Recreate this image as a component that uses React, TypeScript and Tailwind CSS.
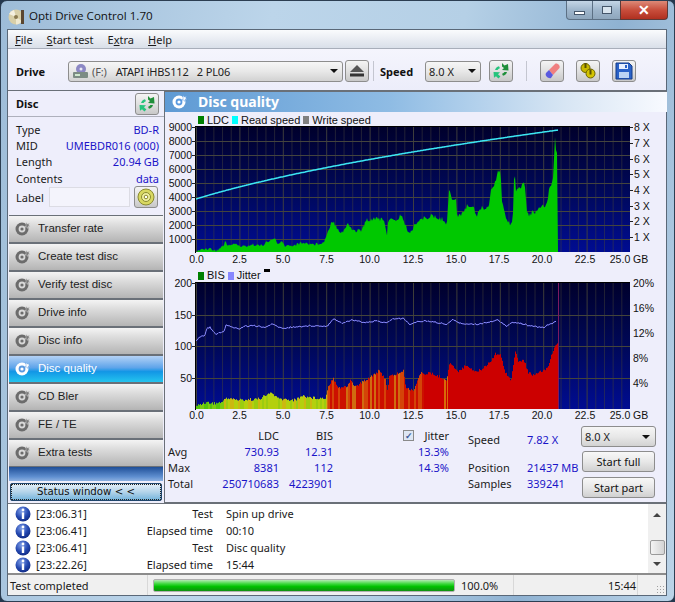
import { ReactNode } from "react";

type Pt = [number, number];

const noise = (i: number) => {
  const s = Math.sin(i * 12.9898) * 43758.5453;
  return s - Math.floor(s);
};

const at = (pts: Pt[], x: number) => {
  for (let i = 1; i < pts.length; i++) {
    if (x <= pts[i][0]) {
      const [x0, y0] = pts[i - 1];
      const [x1, y1] = pts[i];
      return y0 + ((y1 - y0) * (x - x0)) / Math.max(x1 - x0, 0.01);
    }
  }
  return pts[pts.length - 1][1];
};

// zoomed picture coords -> screen coords
const left1 = (a: number[][]): Pt[] => a.map(([x, y]) => [165 + x / 3, 110 + y / 3]);
const right1 = (a: number[][]): Pt[] => a.map(([x, y]) => [420 + x / 3, 110 + y / 3]);
const left2 = (a: number[][]): Pt[] => a.map(([x, y]) => [165 + x / 3, 265 + y / 3]);
const right2 = (a: number[][]): Pt[] => a.map(([x, y]) => [420 + x / 3, 265 + y / 3]);

const ldcPts = [
  ...left1([[95,425],[110,418],[130,415],[155,422],[170,410],[177,405],[178,388],[185,405],[210,402],[230,410],[270,403],[285,408],[310,395],[330,385],[340,405],[350,395],[360,408],[390,405],[410,398],[450,403],[478,396],[487,365],[502,330],[515,350],[530,368],[550,342],[565,362],[590,360],[605,330],[625,325],[640,322],[660,340],[665,380],[670,325],[690,335],[710,313],[720,345],[735,372],[750,340]]),
  ...right1([[0,330],[30,318],[75,330],[80,345],[88,232],[95,265],[108,270],[112,325],[140,290],[160,285],[170,320],[180,295],[205,292],[212,245],[225,215],[235,180],[242,180],[245,270],[255,315],[270,340],[278,335],[283,170],[288,245],[300,235],[313,212],[322,315],[345,305],[380,285],[388,235],[400,200],[405,80],[409,130],[412,130],[416,85]]),
];

const bisPts = [
  ...left2([[95,422],[120,412],[150,415],[175,410],[178,398],[220,405],[280,402],[318,383],[340,402],[390,405],[410,392],[440,398],[480,400],[487,368],[503,338],[520,368],[545,365],[555,345],[570,365],[600,345],[640,318],[660,340],[667,380],[672,335],[715,318],[722,370],[745,375]]),
  ...right2([[0,325],[30,325],[72,340],[78,350],[88,290],[110,320],[140,300],[165,320],[180,315],[210,290],[225,265],[240,270],[255,320],[272,345],[285,262],[295,290],[310,285],[325,325],[345,330],[380,310],[405,240],[415,225]]),
];

const jitterPts = [
  ...left2([[95,225],[108,212],[118,215],[125,190],[135,187],[152,208],[178,198],[182,180],[220,192],[240,183],[270,182],[300,188],[320,177],[350,190],[400,185],[440,182],[487,183],[505,160],[530,175],[560,165],[600,172],[640,168],[665,175],[680,162],[715,160],[735,178]]),
  ...right2([[0,168],[40,170],[80,178],[100,163],[120,175],[170,178],[235,165],[260,183],[280,172],[300,175],[340,185],[370,187],[400,172],[410,170]]),
];

const columns: number[] = [];
for (let x = 196; x < 558; x++) columns.push(x);

const speedLine = [...columns, 558]
  .map((x) => {
    const t = (x - 196) / 362;
    return `${x},${(199 - 55.8 * (Math.sqrt(1 + 4 * t) - 1)).toFixed(1)}`;
  })
  .join(" ");

const ldcPath =
  "M196 252 " +
  columns
    .map((x) => `L${x} ${Math.min(252, at(ldcPts, x) + (noise(x) - 0.5) * (x < 327 ? 3 : 5)).toFixed(1)}`)
    .join(" ") +
  " L558 252 Z";

const jitterLine = columns
  .filter((x) => x < 557)
  .map((x) => `${x},${(at(jitterPts, x) + (noise(x + 7) - 0.5) * 1.6).toFixed(1)}`)
  .join(" ");

const bisColor = (x: number) => {
  const n = noise(Math.floor(x / 2) + 31);
  if (x < 224) return n > 0.75 ? "#7ccc10" : "#58c40c";
  if (x < 327) return n > 0.75 ? "#ccb810" : n > 0.35 ? "#b4d00e" : "#9ccc10";
  if (x < 424) return n > 0.8 ? "#d06c10" : n > 0.55 ? "#d44408" : "#cc1000";
  if (x === 444 || x === 445 || x === 447) return "#d86a08";
  return "#cc0000";
};

const xLabels: [string, number][] = [
  ["0.0", 196.5], ["2.5", 239.5], ["5.0", 283], ["7.5", 326.5], ["10.0", 369.5], ["12.5", 413],
  ["15.0", 456], ["17.5", 499], ["20.0", 542], ["22.5", 585], ["25.0", 620],
];

const AxisX = ({ y }: { y: number }) => (
  <g fontSize="10.5" fill="#111">
    {xLabels.map(([t, x]) => (
      <text key={t} x={x} y={y} textAnchor="middle">
        {t}
      </text>
    ))}
    <text x="633" y={y}>GB</text>
  </g>
);

const Grid = ({ top, bottom, rows, fill, color }: { top: number; bottom: number; rows: number[]; fill: string; color: string }) => (
  <g>
    <rect x="196" y={top} width="434" height={bottom - top} fill={`url(#${fill})`} />
    {Array.from({ length: 50 }, (_, i) => (
      <line
        key={i}
        x1={196.5 + i * 8.68}
        x2={196.5 + i * 8.68}
        y1={top}
        y2={bottom}
        stroke={color}
        strokeOpacity={i % 5 === 0 ? 0.9 : 0.5}
      />
    ))}
    {rows.map((y) => (
      <line key={y} x1="196" x2="630" y1={y + 0.5} y2={y + 0.5} stroke={color} />
    ))}
  </g>
);

const Gradient = ({ id }: { id: string }) => (
  <linearGradient id={id} x1="0" y1="0" x2="0" y2="1">
    <stop offset="0" stopColor="#00002c" />
    <stop offset="0.5" stopColor="#000858" />
    <stop offset="1" stopColor="#000c92" />
  </linearGradient>
);

const Chart1 = () => {
  const rows = [141, 155, 169, 183, 197, 211, 225, 239];
  const rightLabels = [127, 143, 159, 174, 190, 206, 221, 237];
  return (
    <svg width="502" height="141" viewBox="165 127 502 141" className="block overflow-visible font-['Liberation_Sans',sans-serif]">
      <defs>
        <Gradient id="plotA" />
      </defs>
      <Grid top={127} bottom={252} rows={rows} fill="plotA" color="#44443e" />
      <path d={ldcPath} fill="#00c800" />
      <polyline points={speedLine} fill="none" stroke="#3ce8f4" strokeWidth="1.5" />
      <rect x="196" y="126" width="434" height="1" fill="#000" />
      <rect x="195" y="126" width="1" height="127" fill="#000" />
      <g fontSize="10.5" fill="#111">
        {[9000, 8000, 7000, 6000, 5000, 4000, 3000, 2000, 1000].map((v, i) => (
          <g key={v}>
            <text x="192" y={131 + i * 14} textAnchor="end">{v}</text>
            <line x1="192" x2="196" y1={127.5 + i * 14} y2={127.5 + i * 14} stroke="#222" />
          </g>
        ))}
        {rightLabels.map((y, i) => (
          <g key={y}>
            <line x1="630" x2="633" y1={y + 0.5} y2={y + 0.5} stroke="#222" />
            <text x="634" y={y + 4}>{`${8 - i} X`}</text>
          </g>
        ))}
      </g>
      <AxisX y={263} />
    </svg>
  );
};

const Chart2 = () => {
  const rows = [315, 346, 378];
  return (
    <svg width="502" height="138" viewBox="165 283 502 138" className="block overflow-visible font-['Liberation_Sans',sans-serif]">
      <defs>
        <Gradient id="plotB" />
      </defs>
      <Grid top={283} bottom={409} rows={rows} fill="plotB" color="#44443a" />
      {columns.map((x) => {
        const y = Math.min(408, at(bisPts, x) + (noise(x + 3) - 0.5) * 3);
        return <rect key={x} x={x} y={y} width="1" height={409 - y} fill={bisColor(x)} />;
      })}
      <polyline points={jitterLine} fill="none" stroke="#8a8aff" strokeWidth="1" />
      <rect x="558" y="283" width="1" height="126" fill="#7c1a60" />
      <rect x="196" y="282" width="434" height="1" fill="#000" />
      <rect x="195" y="282" width="1" height="128" fill="#000" />
      <g fontSize="10.5" fill="#111">
        {[[200, 283], [150, 315], [100, 346], [50, 378]].map(([v, y]) => (
          <g key={v}>
            <text x="192" y={y + 4} textAnchor="end">{v}</text>
            <line x1="192" x2="196" y1={y + 0.5} y2={y + 0.5} stroke="#222" />
          </g>
        ))}
        {[["20%", 283], ["16%", 308], ["12%", 333], ["8%", 358], ["4%", 383]].map(([t, y]) => (
          <text key={t} x="633" y={Number(y) + 4}>{t}</text>
        ))}
      </g>
      <AxisX y={419} />
    </svg>
  );
};

const Arrows = () => (
  <svg width="18" height="18" viewBox="0 0 18 18">
    <path d="M10 1l2.5 2.5L16 2l.5 6.5-6.5-.5 2-2-2-1.5z" fill="#1f8f3a" />
    <path d="M1.5 10l6.5.2-2 2 2.4 2.3-2 2-2.4-2.3-2 1.6z" fill="#25c47c" />
    <path d="M3 8c.6-2 2-3.4 4-3.8l1 2c-1.2.2-2 1-2.4 1.8z" fill="#25c47c" />
    <path d="M15 10c-.6 2-2 3.4-4 3.8l-1-2c1.2-.2 2-1 2.4-1.8z" fill="#1f8f3a" />
  </svg>
);

const Disc = ({ light }: { light?: boolean }) => (
  <svg width="16" height="16" viewBox="0 0 16 16">
    <circle cx="7" cy="8" r="6.5" fill={light ? "#ffffff" : "#6c6c6c"} />
    <circle cx="7" cy="8" r="3.4" fill={light ? "#5a9ae0" : "#d8d8d8"} />
    <circle cx="7" cy="8" r="1.6" fill={light ? "#ffffff" : "#6c6c6c"} />
    <path d="M11 1.5l1.5 1.5 2-.8-.8 2 1.5 1-2 .3-.4 2-1.2-1.7-1.6.4 1-1.6z" fill={light ? "#ffffff" : "#7a7a7a"} stroke={light ? "#5a9ae0" : "#d8d8d8"} strokeWidth=".5" />
  </svg>
);

const Info = () => (
  <svg width="16" height="16" viewBox="0 0 16 16">
    <defs>
      <radialGradient id="inf" cx="0.4" cy="0.3" r="0.8">
        <stop offset="0" stopColor="#7f9fe8" />
        <stop offset="0.55" stopColor="#2448b0" />
        <stop offset="1" stopColor="#0c2478" />
      </radialGradient>
    </defs>
    <circle cx="8" cy="8" r="7.5" fill="url(#inf)" />
    <circle cx="8" cy="4" r="1.4" fill="#fff" />
    <rect x="6.8" y="6.4" width="2.4" height="6.6" fill="#fff" />
  </svg>
);

const Caret = () => <span className="w-0 h-0 border-x-[4px] border-x-transparent border-t-[4px] border-t-[#111]" />;

const ToolButton = ({ children, w = "w-6" }: { children: ReactNode; w?: string }) => (
  <button className={`${w} h-[22px] shrink-0 flex items-center justify-center rounded-[3px] border border-[#8d8d8d] bg-[linear-gradient(#f4f4f4,#e0e0e0_50%,#c8c8c8)]`}>
    {children}
  </button>
);

const Combo = ({ className, children }: { className: string; children: ReactNode }) => (
  <div className={`${className} h-[21px] shrink-0 flex items-center justify-between rounded-[3px] border border-[#8d8d8d] bg-[linear-gradient(#f6f6f6,#e8e8e8_50%,#d2d2d2)] text-[#222]`}>
    {children}
  </div>
);

const Legend = ({ color, label }: { color: string; label: string }) => (
  <span className="flex items-center gap-[3px]">
    <span className={`w-[6px] h-[8px] ${color}`} />
    <span>{label}</span>
  </span>
);

const navItems = ["Transfer rate", "Create test disc", "Verify test disc", "Drive info", "Disc info", "Disc quality", "CD Bler", "FE / TE", "Extra tests"];

const logRows = [
  ["[23:06.31]", "Test", "Spin up drive"],
  ["[23:06.41]", "Elapsed time", "00:10"],
  ["[23:06.41]", "Test", "Disc quality"],
  ["[23:22.26]", "Elapsed time", "15:44"],
];

const infoRows = [
  ["Type", "BD-R"],
  ["MID", "UMEBDR016 (000)"],
  ["Length", "20.94 GB"],
  ["Contents", "data"],
];

const App = () => {
  return (
    <div className="w-[675px] h-[602px] overflow-hidden bg-[#24384e] font-['Noto_Sans',sans-serif] text-[11px] leading-none text-[#1a1a1a]">
      <div className="w-full h-full flex flex-col rounded-[7px] border border-[#2c3e52] bg-[linear-gradient(100deg,#9dbcd8_0%,#bcd5ea_35%,#b5d0e6_60%,#8fb2d2_80%,#bcd4e8_100%)]">
        {/* title bar */}
        <div className="h-[28px] shrink-0 flex items-start">
          <div className="flex items-center gap-[4px] pl-[7px] pt-[2px] h-[28px]">
            <svg width="17" height="17" viewBox="0 0 17 17">
              <circle cx="8" cy="9" r="7.5" fill="#d8cfa8" />
              <path d="M8 9L1 6a7.5 7.5 0 0 1 5-4z" fill="#f4f0e0" />
              <path d="M8 9l6 4a7.5 7.5 0 0 1-6 3.5z" fill="#efe9d0" />
              <circle cx="8" cy="9" r="2" fill="#8a7a50" />
              <rect x="13" y="2" width="3" height="14" fill="#5a4630" />
            </svg>
            <span className="font-['Open_Sans',sans-serif] text-[11.6px] text-[#111]">Opti Drive Control 1.70</span>
          </div>
          <div className="ml-auto mr-[6px] flex h-[19px]">
            <div className="w-[27px] flex items-center justify-center rounded-bl-[4px] border border-t-0 border-[#5c7084] bg-[linear-gradient(#c4d6e6,#9fb6cc_50%,#8ea6bc)]">
              <span className="w-[11px] h-[4px] mt-[5px] border border-[#45566a] bg-white" />
            </div>
            <div className="w-[27px] flex items-center justify-center border-y border-b-[#5c7084] border-t-0 bg-[linear-gradient(#c4d6e6,#9fb6cc_50%,#8ea6bc)]">
              <span className="w-[10px] h-[8px] border border-[#45566a] bg-[#d8e4ee]" />
            </div>
            <div className="w-[48px] flex items-center justify-center rounded-br-[4px] border border-t-0 border-[#5c3a38] bg-[linear-gradient(#dd8a78,#c84e3c_50%,#b03020)] text-[14px] font-bold text-white">
              ✕
            </div>
          </div>
        </div>

        {/* client */}
        <div className="ml-[6px] mr-[7px] h-[567px] flex flex-col border border-[#5a6878] bg-[#eeeefb]">
          {/* menu */}
          <div className="h-[19px] shrink-0 flex items-center pl-[7px] gap-[14px] border-b border-[#a8aeba] bg-[linear-gradient(#fafbfd,#d9dfe9)] text-[11px]">
            <span><u>F</u>ile</span>
            <span><u>S</u>tart test</span>
            <span>E<u>x</u>tra</span>
            <span><u>H</u>elp</span>
          </div>

          {/* toolbar */}
          <div className="h-[42px] shrink-0 flex items-center pl-[8px] pt-[3px] border-b border-[#6a7078] bg-[linear-gradient(#f5f5fd,#ecedfa)]">
            <span className="w-[52px] font-bold text-[#111]">Drive</span>
            <Combo className="w-[275px] pl-[3px] pr-[4px]">
              <span className="flex items-center text-[11px] tracking-[-0.15px]">
                <svg width="18" height="17" viewBox="0 0 18 17" className="mr-[2px]">
                  <circle cx="9" cy="6" r="5" fill="#8c88c4" />
                  <circle cx="9" cy="6" r="1.5" fill="#e8e8f4" />
                  <rect x="1" y="9" width="15" height="6" rx="1" fill="#7c8c84" />
                  <rect x="3" y="11" width="5" height="2" fill="#cfe8cf" />
                </svg>
                <span className="text-[#555]">(F:)</span>
                <span className="ml-[9px]">ATAPI iHBS112&nbsp;&nbsp; 2 PL06</span>
              </span>
              <Caret />
            </Combo>
            <div className="ml-[2px]">
              <ToolButton>
                <svg width="16" height="14" viewBox="0 0 16 14">
                  <path d="M8 1l7 7H1z" fill="#555" />
                  <rect x="1" y="9.5" width="14" height="3" fill="#333" />
                </svg>
              </ToolButton>
            </div>
            <span className="w-px h-[20px] ml-[4px] bg-[#c4c6d0]" />
            <span className="ml-[6px] w-[45px] font-bold text-[#111]">Speed</span>
            <Combo className="w-[56px] pl-[3px] pr-[4px]">
              <span>8.0 X</span>
              <Caret />
            </Combo>
            <div className="ml-[8px]">
              <ToolButton><Arrows /></ToolButton>
            </div>
            <span className="w-px h-[20px] ml-[13px] bg-[#c4c6d0]" />
            <div className="ml-[13px]">
              <ToolButton>
                <svg width="18" height="18" viewBox="0 0 18 18">
                  <path d="M6 8l6-6c2-1.5 5.5 1.5 4.5 4L10 13z" fill="#f08080" />
                  <path d="M6 8l4 5-2 3c-2.5 1-6.5-2-5-5z" fill="#5a5adf" />
                </svg>
              </ToolButton>
            </div>
            <div className="ml-[12px]">
              <ToolButton>
                <svg width="18" height="18" viewBox="0 0 18 18">
                  <circle cx="6.5" cy="6" r="4.5" fill="#c8b800" stroke="#6a6200" />
                  <circle cx="11.5" cy="11.5" r="4.5" fill="#d4c400" stroke="#6a6200" />
                  <rect x="5.5" y="1" width="2" height="5" fill="#5a5200" />
                  <rect x="10.5" y="7.5" width="2" height="5" fill="#5a5200" />
                </svg>
              </ToolButton>
            </div>
            <div className="ml-[12px]">
              <ToolButton>
                <svg width="18" height="18" viewBox="0 0 18 18">
                  <path d="M1 1h13l3 3v13H1z" fill="#2a62c8" stroke="#123a88" />
                  <rect x="4" y="2" width="9" height="5" fill="#e8f0ff" />
                  <rect x="10" y="3" width="2" height="3" fill="#2a62c8" />
                  <rect x="4" y="10" width="10" height="6" fill="#bcd4f4" />
                </svg>
              </ToolButton>
            </div>
          </div>

          {/* main */}
          <div className="h-[412px] shrink-0 flex">
            {/* left panel */}
            <div className="w-[156px] shrink-0 flex flex-col">
              <div className="h-[26px] shrink-0 flex items-center justify-between pl-[8px] pr-[5px] border-b border-[#aeb0bc]">
                <span className="font-bold text-[#111]">Disc</span>
                <ToolButton><Arrows /></ToolButton>
              </div>
              <div className="h-[98px] shrink-0 pl-[8px] pr-[5px] pt-[4px] flex flex-col">
                {infoRows.map(([k, v]) => (
                  <div key={k} className="h-[16.3px] flex items-center justify-between">
                    <span>{k}</span>
                    <span className="text-[#1a14c8]">{v}</span>
                  </div>
                ))}
                <div className="flex items-center">
                  <span className="w-[33px]">Label</span>
                  <span className="w-[81px] h-[20px] border border-[#dcdce4] bg-[#f4f4fc]" />
                  <div className="ml-[4px]">
                    <ToolButton>
                      <svg width="18" height="18" viewBox="0 0 18 18">
                        <circle cx="9" cy="9" r="8" fill="#d8d860" stroke="#8a8a30" />
                        <circle cx="9" cy="9" r="4.5" fill="#f0f0a0" stroke="#8a8a30" />
                        <circle cx="9" cy="9" r="1.8" fill="#fff" stroke="#8a8a30" />
                      </svg>
                    </ToolButton>
                  </div>
                </div>
              </div>
              <div className="flex flex-col pl-[1px] pr-[1px]">
                {navItems.map((item) => {
                  const active = item === "Disc quality";
                  return (
                    <div
                      key={item}
                      className={
                        active
                          ? "h-[28px] flex items-center pl-[6px] gap-[7px] border-y border-[#6a7078] bg-[linear-gradient(#b4d2f6,#5ea4ea_45%,#1296e6_60%,#24c4ee)] font-['Liberation_Sans',sans-serif] text-[11.5px] text-white"
                          : "h-[28px] flex items-center pl-[6px] gap-[7px] border-y border-[#6a7078] bg-[linear-gradient(#f4f4f4,#dcdcdc_35%,#b4b4b4)] font-['Liberation_Sans',sans-serif] text-[11.5px] text-[#222]"
                      }
                    >
                      <Disc light={active} />
                      <span>{item}</span>
                    </div>
                  );
                })}
              </div>
              <div className="h-[14px] shrink-0 mx-[1px] bg-[linear-gradient(#1f4f98,#5f8fd0_70%,#8cb0e0)]" />
              <div className="flex-1 px-[2px] py-[2px] bg-[#eeeefb]">
                <div className="h-[18px] flex items-center justify-center rounded-[2px] border border-[#20466c] outline-1 outline-dotted -outline-offset-2 outline-[#222] bg-[linear-gradient(#e4eff8,#b4d4ea_50%,#74b4dc)] font-['DejaVu_Sans',sans-serif] text-[10.2px] text-[#111]">
                  Status window &lt; &lt;
                </div>
              </div>
            </div>

            {/* right panel */}
            <div className="flex-1 flex flex-col border-l border-t border-[#6a7078]">
              <div className="h-[20px] shrink-0 flex items-center pl-[7px] gap-[10px] bg-[linear-gradient(90deg,#5e9ad4,#8fbce4_45%,#d8e6f4_80%,#f8faff)]">
                <Disc light />
                <span className="font-bold text-[14px] text-white">Disc quality</span>
              </div>
              <div className="h-[15px] shrink-0 flex items-center gap-[3px] pl-[33px] pt-px font-['Liberation_Sans',sans-serif] text-[11px] text-[#111]">
                <Legend color="bg-[#008000]" label="LDC" />
                <Legend color="bg-[#00ffff]" label="Read speed" />
                <Legend color="bg-[#808080]" label="Write speed" />
              </div>
              <Chart1 />
              <div className="h-[15px] shrink-0 flex items-center gap-[3px] pl-[33px] font-['Liberation_Sans',sans-serif] text-[11px] text-[#111]">
                <Legend color="bg-[#008000]" label="BIS" />
                <Legend color="bg-[#8888ff]" label="Jitter" />
                <span className="w-[6px] h-[3px] mb-[10px] bg-black" />
              </div>
              <Chart2 />

              {/* stats */}
              <div className="flex-1 flex pl-[3px] pt-[6px] border-b border-[#6a7078]">
                <div className="w-[165px] grid grid-cols-[50px_61px_54px] auto-rows-[16px] items-center text-right shrink-0">
                  <span />
                  <span>LDC</span>
                  <span>BIS</span>
                  <span className="text-left">Avg</span>
                  <span className="text-[#1a14c8]">730.93</span>
                  <span className="text-[#1a14c8]">12.31</span>
                  <span className="text-left">Max</span>
                  <span className="text-[#1a14c8]">8381</span>
                  <span className="text-[#1a14c8]">112</span>
                  <span className="text-left">Total</span>
                  <span className="text-[#1a14c8]">250710683</span>
                  <span className="text-[#1a14c8]">4223901</span>
                </div>
                <div className="ml-[70px] w-[46px] shrink-0 grid auto-rows-[16px] items-center text-right">
                  <span className="flex items-center justify-between">
                    <span className="w-[11px] h-[11px] flex items-center justify-center border border-[#8a8a8a] bg-[#dde6f4] text-[9px] font-bold text-[#3a5a9a]">✓</span>
                    <span>Jitter</span>
                  </span>
                  <span className="text-[#1a14c8]">13.3%</span>
                  <span className="text-[#1a14c8]">14.3%</span>
                </div>
                <div className="ml-[19px] mt-[4px] w-[112px] shrink-0 grid grid-cols-[59px_53px] grid-rows-[16px_12px_16px_16px] items-center">
                  <span>Speed</span>
                  <span className="text-[#1a14c8]">7.82 X</span>
                  <span />
                  <span />
                  <span>Position</span>
                  <span className="text-[#1a14c8]">21437 MB</span>
                  <span>Samples</span>
                  <span className="text-[#1a14c8]">339241</span>
                </div>
                <div className="ml-[1px] w-[75px] shrink-0 flex flex-col -mt-[1px]">
                  <Combo className="w-[75px] pl-[3px] pr-[5px]">
                    <span>8.0 X</span>
                    <Caret />
                  </Combo>
                  <button className="mt-[4px] ml-px w-[73px] h-[21px] rounded-[3px] border border-[#8d8d8d] bg-[linear-gradient(#f8f8f8,#e8e8e8_50%,#d0d0d0)] text-[#111]">Start full</button>
                  <button className="mt-[5px] ml-px w-[73px] h-[21px] rounded-[3px] border border-[#8d8d8d] bg-[linear-gradient(#f8f8f8,#e8e8e8_50%,#d0d0d0)] text-[#111]">Start part</button>
                </div>
              </div>
            </div>
          </div>

          {/* log */}
          <div className="h-[72px] shrink-0 flex bg-white border-t border-[#6a7078] border-b-2 border-b-[#8c8c8c]">
            <div className="flex-1 pl-[7px] pt-px">
              {logRows.map(([time, label, value], i) => (
                <div key={i} className="h-[17px] flex items-center">
                  <Info />
                  <span className="ml-[5px] w-[60px]">{time}</span>
                  <span className="w-[117px] text-right">{label}</span>
                  <span className="ml-[13px]">{value}</span>
                </div>
              ))}
            </div>
            <div className="w-[18px] flex flex-col items-center bg-[#f0f0f0]">
              <span className="mt-[9px] w-0 h-0 border-x-[4px] border-x-transparent border-b-[4px] border-b-[#444]" />
              <span className="mt-[23px] w-[15px] h-[15px] rounded-[2px] border border-[#9a9a9a] bg-[linear-gradient(90deg,#f4f4f4,#d4d4d4)]" />
              <span className="mt-[7px] w-0 h-0 border-x-[4px] border-x-transparent border-t-[4px] border-t-[#444]" />
            </div>
          </div>

          {/* status bar */}
          <div className="flex-1 flex items-center bg-[#f0f0f0]">
            <span className="w-[140px] pl-[2px] h-full flex items-center border-r border-[#d8d8d8]">Test completed</span>
            <div className="ml-[5px] w-[302px] h-[13px] rounded-[2px] border border-[#b0b0b0] bg-[linear-gradient(#b4eab4,#3cd83c_35%,#00c000_60%,#109010)]" />
            <span className="ml-[6px] w-[53px] h-full flex items-center border-r border-[#d8d8d8]">100.0%</span>
            <span className="w-[124px] pr-px h-full flex items-center justify-end border-r border-[#d8d8d8]">15:44</span>
            <span className="ml-auto mr-[2px] mt-[8px] w-[8px] h-[8px] bg-[radial-gradient(#a0a0a0_1px,transparent_1px)] bg-[length:3px_3px]" />
          </div>
        </div>
      </div>
    </div>
  );
};

export default App;
